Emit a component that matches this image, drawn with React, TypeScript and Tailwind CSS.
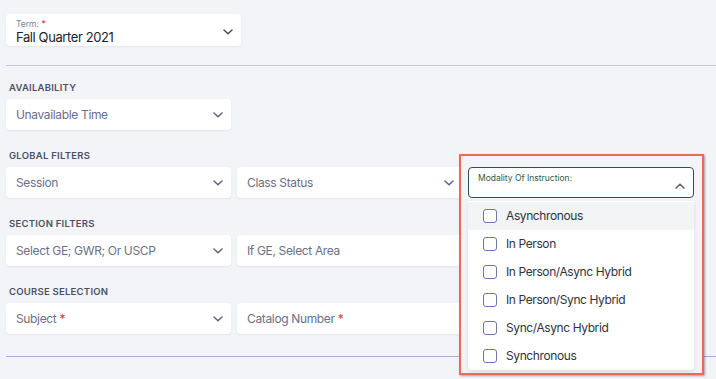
import React from "react";

const Chevron = ({ dark = false, up = false }: { dark?: boolean; up?: boolean }) => (
  <svg width="10" height="6" viewBox="0 0 10 6" className="shrink-0">
    <path
      d={up ? "M1 5 L5 1.2 L9 5" : "M1 1 L5 4.8 L9 1"}
      fill="none"
      stroke={dark ? "#4a4d5a" : up ? "#5b5e66" : "#5c6190"}
      strokeWidth="1.5"
      strokeLinecap="round"
      strokeLinejoin="round"
    />
  </svg>
);

const Select = ({
  text,
  required = false,
  chevron = true,
}: {
  text: string;
  required?: boolean;
  chevron?: boolean;
}) => (
  <div className="flex h-[31px] items-center justify-between rounded-[4px] bg-white pl-[10px] pr-[8px] pt-[1px] shadow-[0_1px_2px_rgba(40,45,80,0.08)]">
    <span className="text-[12px] leading-none tracking-[-0.35px] text-[#6b6f88]">
      {text}
      {required && <span className="ml-[3px] text-[#d33a3f]">*</span>}
    </span>
    {chevron && <Chevron />}
  </div>
);

const Label = ({ children }: { children: React.ReactNode }) => (
  <div className="h-[12px] pl-[3px] pt-[1px] text-[9.5px] font-semibold uppercase leading-[12px] tracking-[0.25px] text-[#4b5068]">
    {children}
  </div>
);

const Checkbox = () => (
  <span className="block h-[14px] w-[14px] shrink-0 rounded-[3px] border-[1.5px] border-[#6f77a6] bg-white" />
);

const options = [
  "Asynchronous",
  "In Person",
  "In Person/Async Hybrid",
  "In Person/Sync Hybrid",
  "Sync/Async Hybrid",
  "Synchronous",
];

export default function App() {
  return (
    <div
      className="relative h-[379px] w-[716px] overflow-hidden bg-[#f3f4f8]"
      style={{ fontFamily: "Inter, 'Noto Sans', sans-serif" }}
    >
      <div className="pl-[6px] pt-[14px]">
        {/* Term */}
        <div className="flex h-[32px] w-[235px] items-center justify-between rounded-[4px] bg-white pl-[10px] pr-[8px] pt-[3px] shadow-[0_1px_2px_rgba(40,45,80,0.08)]">
          <div className="flex flex-col">
            <span className="text-[8.5px] leading-[10px] text-[#7b7f93]">
              Term: <span className="text-[#d33a3f]">*</span>
            </span>
            <span className="text-[13px] leading-[16px] tracking-[-0.4px] text-[#1e2028]">Fall Quarter 2021</span>
          </div>
          <Chevron dark />
        </div>

        <div className="mt-[19px] h-px bg-[#c6c8d7]" />

        <div className="pt-[15px]">
          <Label>Availability</Label>
          <div className="mt-[6px] w-[225px]">
            <Select text="Unavailable Time" />
          </div>

          <div className="mt-[19px]">
            <Label>Global Filters</Label>
            <div className="mt-[6px] grid grid-cols-[225px_225px_225px] gap-[6px]">
              <Select text="Session" />
              <Select text="Class Status" />
              <Select text="" chevron={false} />
            </div>
          </div>

          <div className="mt-[19px]">
            <Label>Section Filters</Label>
            <div className="mt-[6px] grid grid-cols-[225px_225px_225px] gap-[6px]">
              <Select text="Select GE; GWR; Or USCP" />
              <Select text="If GE, Select Area" chevron={false} />
              <Select text="" chevron={false} />
            </div>
          </div>

          <div className="mt-[19px]">
            <Label>Course Selection</Label>
            <div className="mt-[6px] grid grid-cols-[225px_225px_225px] gap-[6px]">
              <Select text="Subject" required />
              <Select text="Catalog Number" required chevron={false} />
              <Select text="" chevron={false} />
            </div>
          </div>

          <div className="mt-[22px] h-px bg-[#a9aed0]" />
        </div>
      </div>

      {/* Highlighted dropdown overlay */}
      <div className="absolute left-[459px] top-[154px] h-[221px] w-[245px] border-2 border-[#f0685a] bg-[#f3f4f8] pl-[7px] pr-[8px] pt-[11px] shadow-[1px_1px_2px_rgba(0,0,0,0.35)]">
        <div className="flex h-[31px] items-start justify-between rounded-[4px] border border-[#2c5242] bg-white pl-[9px] pr-[8px] pt-[5px]">
          <span className="text-[8.5px] leading-[10px] text-[#2f5a46]">Modality Of Instruction:</span>
          <span className="mt-[10px]">
            <Chevron up />
          </span>
        </div>
        <div className="mt-[3px] overflow-hidden rounded-b-[4px] bg-white pt-[1px] shadow-[0_2px_4px_rgba(40,45,80,0.12)]">
          {options.map((o, i) => (
            <div
              key={o}
              className={`flex h-[28px] items-center gap-[9px] pl-[15px] ${i === 0 ? "bg-[#f3f4f6]" : "bg-white"}`}
            >
              <Checkbox />
              <span className="text-[12px] leading-none tracking-[-0.4px] text-[#2f3340]">{o}</span>
            </div>
          ))}
        </div>
      </div>
    </div>
  );
}
